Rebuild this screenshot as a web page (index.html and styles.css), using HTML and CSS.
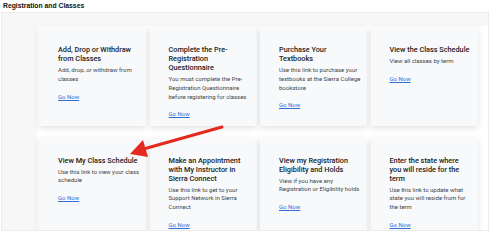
FILE: index.html
```html
<!DOCTYPE html>
<html>
<head>
<meta charset="utf-8">
<link rel="stylesheet" href="styles.css">
</head>
<body>
<div class="page">
  <h1 class="title">Registration and Classes</h1>
  <div class="panel">
    <div class="inner">
      <div class="grid">
        <div class="card">
          <h2>Add, Drop or Withdraw from Classes</h2>
          <p>Add, drop, or withdraw from classes</p>
          <a href="#">Go Now</a>
        </div>
        <div class="card">
          <h2>Complete the Pre-Registration Questionnaire</h2>
          <p>You must complete the Pre-Registration Questionnaire before registering for classes</p>
          <a href="#">Go Now</a>
        </div>
        <div class="card">
          <h2>Purchase Your Textbooks</h2>
          <p>Use this link to purchase your textbooks at the Sierra College bookstore</p>
          <a href="#">Go Now</a>
        </div>
        <div class="card">
          <h2>View the Class Schedule</h2>
          <p>View all classes by term</p>
          <a href="#">Go Now</a>
        </div>
        <div class="card">
          <h2>View My Class Schedule</h2>
          <p>Use this link to view your class schedule</p>
          <a href="#">Go Now</a>
        </div>
        <div class="card">
          <h2>Make an Appointment with My Instructor in Sierra Connect</h2>
          <p>Use this link to get to your Support Network in Sierra Connect</p>
          <a href="#">Go Now</a>
        </div>
        <div class="card">
          <h2>View my Registration Eligibility and Holds</h2>
          <p>View if you have any Registration or Eligibility holds</p>
          <a href="#">Go Now</a>
        </div>
        <div class="card">
          <h2>Enter the state where you will reside for the term</h2>
          <p>Use this link to update what state you will reside from for the term</p>
          <a href="#">Go Now</a>
        </div>
      </div>
    </div>
  </div>
  <svg class="arrow" width="500" height="241" viewBox="0 0 500 241">
    <line x1="222" y1="127" x2="140" y2="150" stroke="#e42a1f" stroke-width="3" stroke-linecap="round"/>
    <polygon points="130,154 143,140 148,157" fill="#e42a1f"/>
  </svg>
</div>
</body>
</html>
```
FILE: styles.css
```css
html, body {
  margin: 0;
  padding: 0;
  background: #ffffff;
}
.page {
  position: relative;
  width: 500px;
  height: 241px;
  overflow: hidden;
  font-family: Roboto, "Liberation Sans", sans-serif;
}
.title {
  margin: 0;
  padding: 1px 3px 0;
  height: 11px;
  font-family: "Liberation Sans", Arial, sans-serif;
  font-weight: bold;
  font-size: 6.8px;
  line-height: 9px;
  color: #111;
}
.panel {
  margin-left: 1px;
  width: 488px;
  height: 219px;
  border: 1px solid #ebebeb;
  background: #f7f7f7;
  padding: 13px 0 0 35px;
  box-sizing: border-box;
  overflow: hidden;
}
.inner {
  background: #ffffff;
  height: 100%;
  padding: 1px 0 0 2px;
  box-sizing: border-box;
}
.grid {
  display: grid;
  grid-template-columns: repeat(4, 107px);
  grid-auto-rows: 99px;
  column-gap: 3.5px;
  row-gap: 11.5px;
}
.card {
  background: #f8f9fb;
  box-shadow: 0 2px 6px rgba(0, 0, 0, 0.12);
  padding: 18px 6px 0 19px;
  box-sizing: border-box;
}
.card h2 {
  margin: 0;
  font-size: 7.3px;
  line-height: 9px;
  font-weight: 500;
  color: #222;
}
.card p {
  margin: 3px 0 0;
  font-size: 6px;
  line-height: 8.8px;
  color: #444;
}
.card a {
  display: inline-block;
  margin-top: 5px;
  font-size: 6px;
  line-height: 9px;
  color: #2f6fd6;
}
.arrow {
  position: absolute;
  left: 0;
  top: 0;
  pointer-events: none;
}
```
